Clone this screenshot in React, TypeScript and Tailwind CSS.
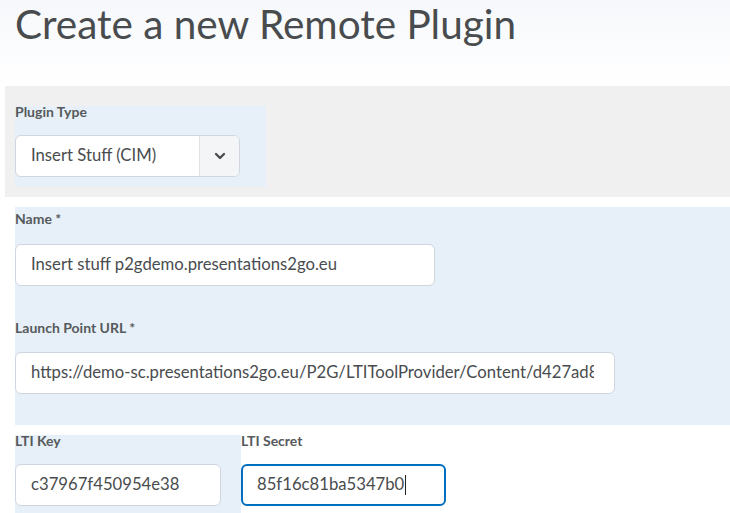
import { ChevronDown } from "lucide-react";

const label = "block text-[14px] font-bold text-[#565a5c] leading-[12px]";
const field =
    "h-[42px] rounded-md border border-[#cfd6de] bg-white px-[15px] flex items-center text-[16.7px] text-[#494c4e]";

export default function App() {
    return (
        <div className="w-[730px] h-[513px] overflow-hidden bg-white font-['Lato','Open_Sans',sans-serif]">
            <header className="h-[86px] bg-gradient-to-b from-[#f6f8fb] to-white pl-[15px] pt-[1px]">
                <h1 className="text-[40.5px] leading-[46px] text-[#494c4e] font-normal">
                    Create a new Remote Plugin
                </h1>
            </header>

            <section className="ml-[5px] h-[111px] bg-[#f0f0f0] pt-[20px] pl-[10px]">
                <div className="w-[251px] h-[81px] bg-[#e7f0f8]">
                    <label className={label}>Plugin Type</label>
                    <div className="mt-[17px] w-[225px] h-[42px] rounded-md border border-[#cfd6de] bg-white flex overflow-hidden">
                        <div className="flex-1 flex items-center pl-[15px] text-[16.7px] text-[#494c4e]">
                            Insert Stuff (CIM)
                        </div>
                        <div className="w-[40px] border-l border-[#dfe3e8] bg-[#f4f5f7] flex items-center justify-center">
                            <ChevronDown className="h-[16px] w-[16px] text-[#494c4e]" strokeWidth={3.5} />
                        </div>
                    </div>
                </div>
            </section>

            <section className="mt-[10px] ml-[15px] h-[218px] bg-[#e7f0f8] pt-[6px]">
                <label className={label}>Name *</label>
                <div className={`${field} mt-[19px] w-[420px]`}>
                    <span className="whitespace-nowrap overflow-hidden">Insert stuff p2gdemo.presentations2go.eu</span>
                </div>
                <label className={`${label} mt-[36px]`}>Launch Point URL *</label>
                <div className={`${field} mt-[18px] w-[600px] pr-[20px]`}>
                    <span className="flex-1 whitespace-nowrap overflow-hidden">
                        https://demo-sc.presentations2go.eu/P2G/LTIToolProvider/Content/d427ad8
                    </span>
                </div>
            </section>

            <section className="mt-[10px] ml-[15px] flex">
                <div className="w-[226px] h-[80px] bg-[#e7f0f8]">
                    <label className={label}>LTI Key</label>
                    <div className={`${field} mt-[17px] w-[206px]`}>c37967f450954e38</div>
                </div>
                <div className="w-[205px]">
                    <label className={label}>LTI Secret</label>
                    <div className="mt-[17px] w-[205px] h-[42px] rounded-md border-2 border-[#006fbf] bg-white px-[14px] flex items-center text-[16.7px] text-[#494c4e]">
                        85f16c81ba5347b0
                        <span className="ml-px inline-block w-px h-[20px] bg-[#222]" />
                    </div>
                </div>
            </section>
        </div>
    );
}
